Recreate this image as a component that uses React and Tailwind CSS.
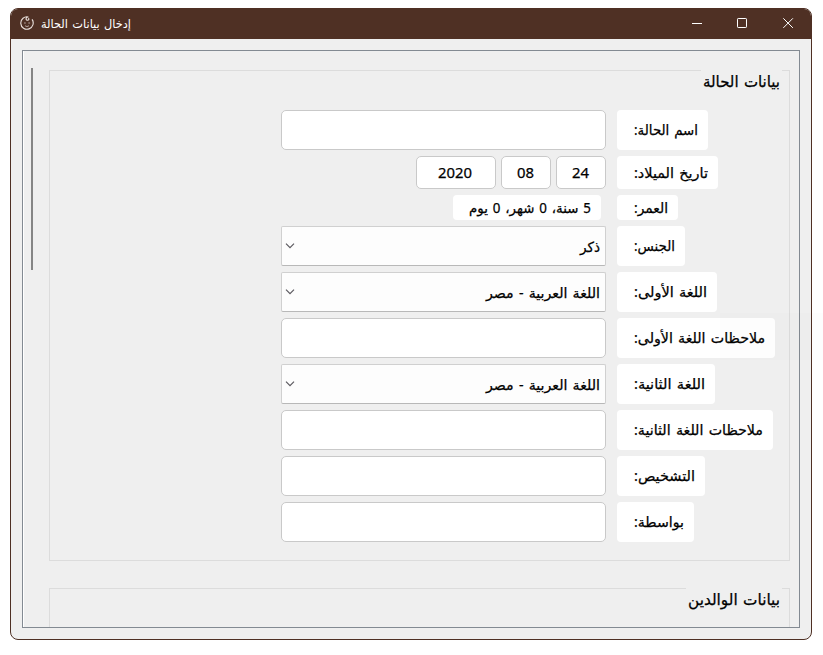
import { useLayoutEffect, useRef, useState } from "react";

// One line of text, condensed or widened horizontally to fill its box.
function Fit({ children, width, className = "", dir = "rtl" }) {
  const ref = useRef(null);
  const [scale, setScale] = useState(1);
  useLayoutEffect(() => {
    setScale(width / ref.current.getBoundingClientRect().width);
  }, [width]);
  return (
    <span dir="ltr" className={`block shrink-0 whitespace-nowrap ${className}`} style={{ width }}>
      <span className="block origin-left" style={{ transform: `scaleX(${scale})` }}>
        <span ref={ref} dir={dir} className="inline-block [word-spacing:1.5px]">
          {children}
        </span>
      </span>
    </span>
  );
}

function TextBox() {
  return <div className="h-full w-[325px] rounded-[5px] border border-[#c9c9c9] bg-white" />;
}

function Select({ value, width }) {
  return (
    <div className="flex h-full w-[325px] items-center justify-between rounded-[2px] border border-[#d0d0d0] border-b-[#b8b8b8] bg-[#fdfdfd] pr-[5px] pl-[3px]">
      <svg width="10" height="6" viewBox="0 0 10 6" fill="none" stroke="#5c5a60" strokeWidth="1.2" className="mb-px">
        <path d="M1 0.7 5 4.7 9 0.7" />
      </svg>
      <Fit width={width} className="pt-px">{value}</Fit>
    </div>
  );
}

function DatePart({ value, size, width }) {
  return (
    <div className={`flex h-full ${size} items-center justify-center rounded-[5px] border border-[#c9c9c9] bg-white pr-[2px]`}>
      <Fit width={width} dir="ltr">{value}</Fit>
    </div>
  );
}

function Row({ label, width, height = "h-10", children }) {
  return (
    <div className={`flex ${height} gap-[11px]`}>
      <div className="flex w-[325px] shrink-0 justify-end">{children}</div>
      <div className="flex items-center rounded bg-white pr-[10px] pl-[17px]">
        <Fit width={width - 1}>{label}</Fit>
      </div>
    </div>
  );
}

function Legend({ width, children }) {
  return (
    <div className="-mt-px mr-[7px] ml-auto flex h-7 w-fit bg-[#efefef] pr-[2px] pl-[2px] text-[16px] leading-[22px]">
      <Fit width={width}>{children}</Fit>
    </div>
  );
}

export default function App() {
  return (
    <div className="relative h-[655px] w-[823px] overflow-hidden bg-white pt-2 pl-[10px] font-['Segoe_UI','Noto_Sans','DejaVu_Sans',sans-serif] text-[14px] leading-5 text-black">
      <div className="flex h-[632px] w-[802px] flex-col overflow-hidden rounded-[8px] border border-[#4f3024] bg-[#efefef]">
        <header className="flex h-[30px] shrink-0 items-center bg-[#4f3024] text-white">
          <svg width="14" height="14" viewBox="0 0 14 14" fill="none" stroke="#e8dfdb" className="-mt-[2px] ml-[9px]">
            <path d="M8.4 1A6.2 6.2 0 1 0 12 3.4M8.4 1C6 .8 5.2 3.6 7.2 4.2 8.8 4.5 9.4 2.8 8.3 2.3M12 3.4C13 4.4 13.3 5.6 13.2 7" strokeWidth="1.1" />
            <path d="M4 7h1.8M8.3 7h1.8M5 9.6c1 1.2 3 1.2 4 0" strokeOpacity="0.65" />
          </svg>
          <Fit width={90} className="ml-[7px] text-[12px]">إدخال بيانات الحالة</Fit>
          <svg width="102" height="12" viewBox="0 0 102 12" fill="none" stroke="white" className="-mt-[2px] mr-[17px] ml-auto">
            <path d="M0 6.5h10" />
            <rect x="45.5" y="1.5" width="9" height="9" rx="0.7" />
            <path d="m91.3 1.3 9.6 9.6m0-9.6-9.6 9.6" />
          </svg>
        </header>
        <main className="mt-[11px] ml-[11px] flex h-[578px] w-[778px] shrink-0 overflow-hidden border border-[#838a92] [-webkit-text-stroke:0.25px_black]">
          <div className="flex w-[26px] shrink-0 border-l border-white pt-[17px] pl-[7px]">
            <div className="h-[202px] w-[2px] bg-[#858585]" />
          </div>
          <div className="mt-[19px] w-[741px] shrink-0">
            <section className="h-[491px] border border-[#dcdcdc]">
              <Legend width={77}>بيانات الحالة</Legend>
              <div className="mt-3 ml-[231px] flex flex-col gap-[6px]">
                <Row label="اسم الحالة:" width={65}><TextBox /></Row>
                <Row label="تاريخ الميلاد:" width={75} height="h-[33px]">
                  <div className="flex gap-[5px]">
                    <DatePart value="2020" size="w-20" width={34} />
                    <DatePart value="08" size="w-[50px]" width={17} />
                    <DatePart value="24" size="w-[50px]" width={17} />
                  </div>
                </Row>
                <Row label="العمر:" width={35} height="h-[25px]">
                  <div className="mr-[5px] flex items-center rounded bg-white pr-[10px] pl-4">
                    <Fit width={122}>5 سنة، 0 شهر، 0 يوم</Fit>
                  </div>
                </Row>
                <Row label="الجنس:" width={42}><Select value="ذكر" width={20} /></Row>
                <Row label="اللغة الأولى:" width={74}><Select value="اللغة العربية - مصر" width={114} /></Row>
                <Row label="ملاحظات اللغة الأولى:" width={132}><TextBox /></Row>
                <Row label="اللغة الثانية:" width={72}><Select value="اللغة العربية - مصر" width={114} /></Row>
                <Row label="ملاحظات اللغة الثانية:" width={130}><TextBox /></Row>
                <Row label="التشخيص:" width={62}><TextBox /></Row>
                <Row label="بواسطة:" width={51}><TextBox /></Row>
              </div>
            </section>
            <section className="mt-[27px] h-[120px] border border-[#dcdcdc]">
              <Legend width={92}>بيانات الوالدين</Legend>
            </section>
          </div>
        </main>
      </div>
      <div className="absolute top-[313px] left-[720px] h-[47px] w-[103px] bg-black/[0.008]" />
    </div>
  );
}
